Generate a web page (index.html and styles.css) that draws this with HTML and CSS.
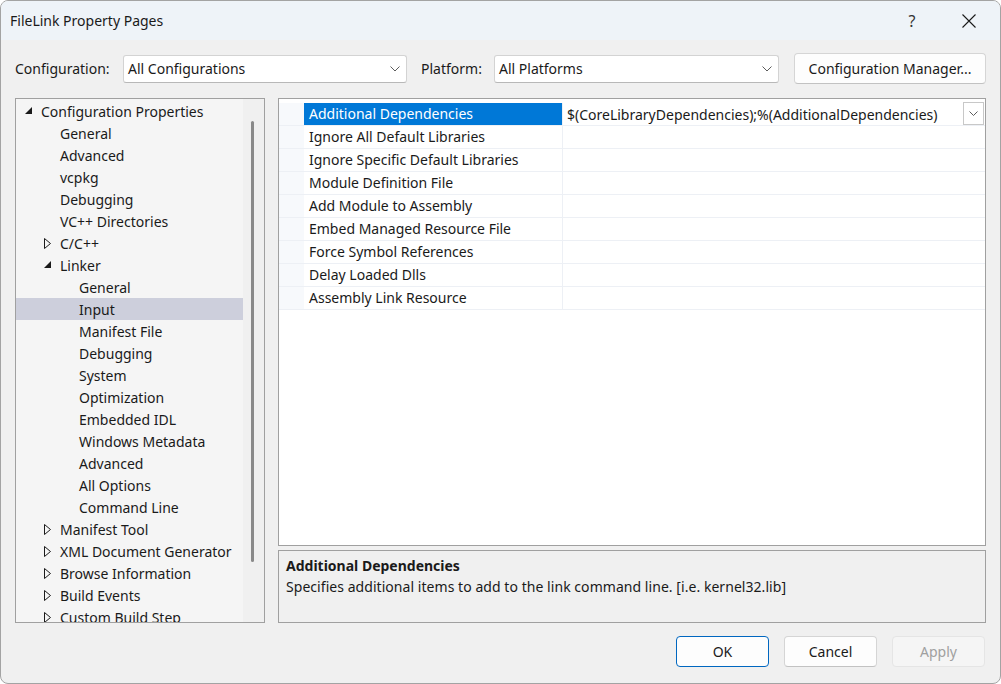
FILE: index.html
```html
<!DOCTYPE html>
<html lang="en">
<head>
    <meta charset="UTF-8">
    <title>FileLink Property Pages</title>
    <link rel="stylesheet" href="styles.css">
</head>
<body>

<div class="window">
    <div class="titlebar">
        <span class="title">FileLink Property Pages</span>
        <span class="help">?</span>
        <span class="close">
            <svg width="16" height="16" viewBox="0 0 16 16"><path d="M1.5 1.5 L14.5 14.5 M14.5 1.5 L1.5 14.5" stroke="#1a1a1a" stroke-width="1.1" fill="none"/></svg>
        </span>
    </div>

    <div class="config-row">
        <label class="lbl lbl-config">Configuration:</label>
        <div class="combo combo-config">
            <span>All Configurations</span>
            <svg class="chev" width="10" height="6" viewBox="0 0 10 6"><polyline points="0.5,0.5 5,5 9.5,0.5" stroke="#5c5c5c" fill="none"/></svg>
        </div>
        <label class="lbl lbl-platform">Platform:</label>
        <div class="combo combo-platform">
            <span>All Platforms</span>
            <svg class="chev" width="10" height="6" viewBox="0 0 10 6"><polyline points="0.5,0.5 5,5 9.5,0.5" stroke="#5c5c5c" fill="none"/></svg>
        </div>
        <button class="btn btn-manager">Configuration Manager...</button>
    </div>

    <div class="main">
        <div class="tree">
            <div class="tree-list">
                <div class="node lvl0"><span class="exp"><svg width="8" height="8" viewBox="0 0 8 8"><polygon points="7,0 7,7 0,7" fill="#1a1a1a"/></svg></span>Configuration Properties</div>
                <div class="node lvl1"><span class="exp"></span>General</div>
                <div class="node lvl1"><span class="exp"></span>Advanced</div>
                <div class="node lvl1"><span class="exp"></span>vcpkg</div>
                <div class="node lvl1"><span class="exp"></span>Debugging</div>
                <div class="node lvl1"><span class="exp"></span>VC++ Directories</div>
                <div class="node lvl1"><span class="exp"><svg width="8" height="11" viewBox="0 0 8 11"><polygon points="0.5,0.5 6.5,5.5 0.5,10.5" fill="none" stroke="#1a1a1a"/></svg></span>C/C++</div>
                <div class="node lvl1"><span class="exp"><svg width="8" height="8" viewBox="0 0 8 8"><polygon points="7,0 7,7 0,7" fill="#1a1a1a"/></svg></span>Linker</div>
                <div class="node lvl2"><span class="exp"></span>General</div>
                <div class="node lvl2 selected"><span class="exp"></span>Input</div>
                <div class="node lvl2"><span class="exp"></span>Manifest File</div>
                <div class="node lvl2"><span class="exp"></span>Debugging</div>
                <div class="node lvl2"><span class="exp"></span>System</div>
                <div class="node lvl2"><span class="exp"></span>Optimization</div>
                <div class="node lvl2"><span class="exp"></span>Embedded IDL</div>
                <div class="node lvl2"><span class="exp"></span>Windows Metadata</div>
                <div class="node lvl2"><span class="exp"></span>Advanced</div>
                <div class="node lvl2"><span class="exp"></span>All Options</div>
                <div class="node lvl2"><span class="exp"></span>Command Line</div>
                <div class="node lvl1"><span class="exp"><svg width="8" height="11" viewBox="0 0 8 11"><polygon points="0.5,0.5 6.5,5.5 0.5,10.5" fill="none" stroke="#1a1a1a"/></svg></span>Manifest Tool</div>
                <div class="node lvl1"><span class="exp"><svg width="8" height="11" viewBox="0 0 8 11"><polygon points="0.5,0.5 6.5,5.5 0.5,10.5" fill="none" stroke="#1a1a1a"/></svg></span>XML Document Generator</div>
                <div class="node lvl1"><span class="exp"><svg width="8" height="11" viewBox="0 0 8 11"><polygon points="0.5,0.5 6.5,5.5 0.5,10.5" fill="none" stroke="#1a1a1a"/></svg></span>Browse Information</div>
                <div class="node lvl1"><span class="exp"><svg width="8" height="11" viewBox="0 0 8 11"><polygon points="0.5,0.5 6.5,5.5 0.5,10.5" fill="none" stroke="#1a1a1a"/></svg></span>Build Events</div>
                <div class="node lvl1"><span class="exp"><svg width="8" height="11" viewBox="0 0 8 11"><polygon points="0.5,0.5 6.5,5.5 0.5,10.5" fill="none" stroke="#1a1a1a"/></svg></span>Custom Build Step</div>
            </div>
            <div class="scroll-track"><div class="scroll-thumb"></div></div>
        </div>

        <div class="right">
            <div class="grid">
                <div class="prop selected">
                    <div class="gutter"></div>
                    <div class="name">Additional Dependencies</div>
                    <div class="value">
                        <span class="value-text">$(CoreLibraryDependencies);%(AdditionalDependencies)</span>
                        <span class="drop">
                            <svg width="9" height="5" viewBox="0 0 9 5"><polyline points="0.5,0.5 4.5,4.5 8.5,0.5" stroke="#5c5c5c" fill="none"/></svg>
                        </span>
                    </div>
                </div>
                <div class="prop"><div class="gutter"></div><div class="name">Ignore All Default Libraries</div><div class="value"></div></div>
                <div class="prop"><div class="gutter"></div><div class="name">Ignore Specific Default Libraries</div><div class="value"></div></div>
                <div class="prop"><div class="gutter"></div><div class="name">Module Definition File</div><div class="value"></div></div>
                <div class="prop"><div class="gutter"></div><div class="name">Add Module to Assembly</div><div class="value"></div></div>
                <div class="prop"><div class="gutter"></div><div class="name">Embed Managed Resource File</div><div class="value"></div></div>
                <div class="prop"><div class="gutter"></div><div class="name">Force Symbol References</div><div class="value"></div></div>
                <div class="prop"><div class="gutter"></div><div class="name">Delay Loaded Dlls</div><div class="value"></div></div>
                <div class="prop"><div class="gutter"></div><div class="name">Assembly Link Resource</div><div class="value"></div></div>
            </div>
            <div class="desc">
                <div class="desc-title">Additional Dependencies</div>
                <div class="desc-text">Specifies additional items to add to the link command line. [i.e. kernel32.lib]</div>
            </div>
        </div>
    </div>

    <div class="footer">
        <button class="btn btn-ok">OK</button>
        <button class="btn">Cancel</button>
        <button class="btn btn-disabled">Apply</button>
    </div>
</div>

</body>
</html>
```

FILE: styles.css
```css
* {
    box-sizing: border-box;
}

html, body {
    margin: 0;
    background: #ffffff;
}

body {
    font-family: "Noto Sans", "DejaVu Sans", sans-serif;
    font-size: 14px;
    color: #1a1a1a;
}

.window {
    width: 1001px;
    height: 684px;
    border: 1px solid #a3a3a3;
    border-radius: 8px;
    overflow: hidden;
    background: #f0f0f0;
    display: flex;
    flex-direction: column;
}

/* title bar */
.titlebar {
    height: 39px;
    flex: none;
    background: #eef3f8;
    display: flex;
    align-items: center;
    padding-left: 9px;
}

.title {
    flex: 1;
}

.help {
    width: 14px;
    text-align: center;
    font-size: 16px;
    color: #333333;
    margin-right: 42px;
}

.close {
    width: 16px;
    height: 16px;
    margin-right: 23px;
    display: flex;
}

/* configuration row */
.config-row {
    height: 58px;
    flex: none;
    display: flex;
    align-items: center;
    padding: 13px 0 14px 14px;
}

.lbl-config {
    width: 108px;
}

.lbl-platform {
    width: 73px;
    margin-left: 14px;
}

.combo {
    height: 28px;
    background: #ffffff;
    border: 1px solid #d3d3d3;
    border-bottom-color: #b8b8b8;
    border-radius: 3px;
    display: flex;
    align-items: center;
    justify-content: space-between;
    padding: 0 6px 0 4px;
}

.combo-config {
    width: 284px;
}

.combo-platform {
    width: 285px;
}

.btn {
    font-family: inherit;
    font-size: 14px;
    color: #1a1a1a;
    background: #fdfdfd;
    border: 1px solid #d5d5d5;
    border-bottom-color: #c2c2c2;
    border-radius: 4px;
    height: 31px;
    padding: 0;
}

.btn-manager {
    width: 192px;
    margin-left: 15px;
}

/* main area */
.main {
    height: 525px;
    flex: none;
    display: flex;
    padding-left: 14px;
}

.tree {
    width: 250px;
    height: 525px;
    border: 1px solid #a0a0a0;
    background: #f5f5f5;
    display: flex;
    overflow: hidden;
}

.tree-list {
    width: 227px;
    padding-top: 1px;
}

.node {
    height: 22px;
    display: flex;
    align-items: center;
    white-space: nowrap;
    padding-left: 8px;
}

.node.lvl1 {
    padding-left: 27px;
}

.node.lvl2 {
    padding-left: 46px;
}

.node.selected {
    background: #cdcfdc;
}

.exp {
    width: 17px;
    height: 22px;
    display: flex;
    align-items: center;
    padding-left: 1px;
}

.lvl1 .exp {
    padding-left: 1px;
}

.scroll-track {
    width: 21px;
    background: #f0f0f0;
    padding: 22px 0 0 8px;
}

.scroll-thumb {
    width: 3px;
    height: 441px;
    border-radius: 2px;
    background: #8a8a8a;
}

.right {
    width: 708px;
    margin-left: 13px;
    display: flex;
    flex-direction: column;
}

/* property grid */
.grid {
    height: 449px;
    border: 1px solid #a0a0a0;
    background: #ffffff;
    padding-top: 4px;
}

.prop {
    height: 23px;
    display: flex;
    border-bottom: 1px solid #edf0f5;
}

.gutter {
    width: 25px;
    background: #f7f9fc;
}

.name {
    width: 259px;
    padding-left: 5px;
    line-height: 22px;
    border-right: 1px solid #edf0f5;
    white-space: nowrap;
}

.prop.selected .name {
    background: #0078d7;
    color: #ffffff;
}

.value {
    flex: 1;
    display: flex;
    align-items: center;
    justify-content: space-between;
    padding-left: 4px;
    white-space: nowrap;
}

.drop {
    width: 21px;
    height: 23px;
    margin-top: -2px;
    margin-right: 1px;
    border: 1px solid #c8c8c8;
    background: #ffffff;
    display: flex;
    align-items: center;
    justify-content: center;
}

/* description pane */
.desc {
    height: 73px;
    margin-top: 4px;
    border: 1px solid #a0a0a0;
    background: #f0f0f0;
    padding: 5px 7px;
}

.desc-title {
    font-weight: bold;
    line-height: 20px;
}

.desc-text {
    line-height: 22px;
    letter-spacing: 0.05px;
}

/* bottom buttons */
.footer {
    height: 60px;
    flex: none;
    display: flex;
    justify-content: flex-end;
    gap: 15px;
    padding: 13px 15px 0 0;
}

.footer .btn {
    width: 93px;
}

.btn-ok {
    border-color: #0067c0;
}

.btn-disabled {
    color: #a0a0a0;
    background: #f5f5f5;
    border-color: #e5e5e5;
}
```
